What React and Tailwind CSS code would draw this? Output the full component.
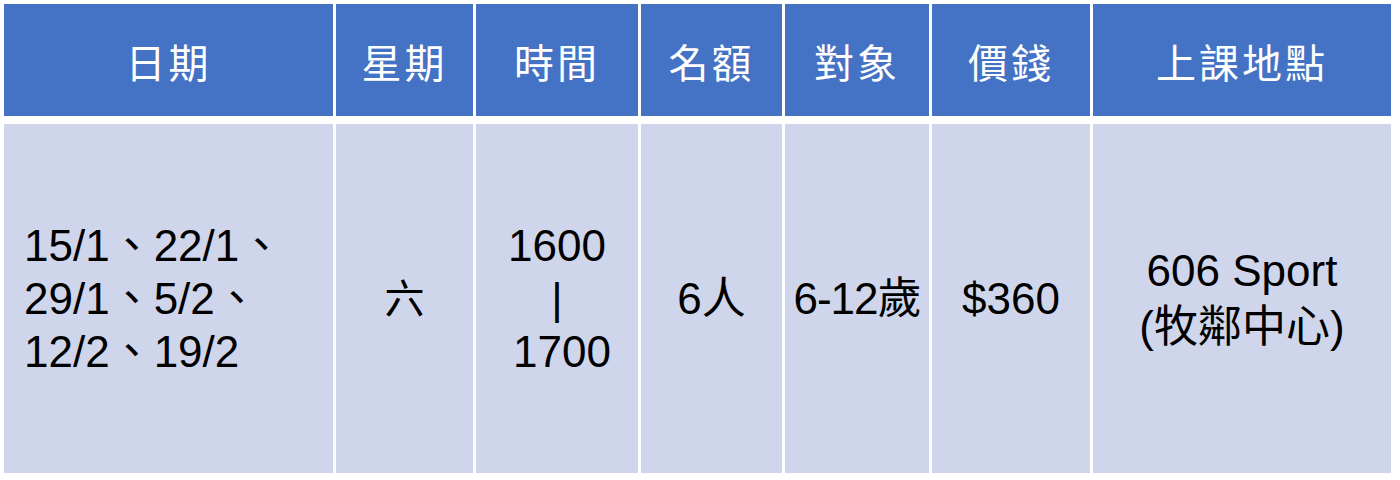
import React from 'react'

const headers = ['日期', '星期', '時間', '名額', '對象', '價錢', '上課地點']

const cjk = { fontFamily: '"Liberation Sans", "Noto Sans CJK TC", sans-serif' }

export default function App() {
  return (
    <div className="w-[1400px] h-[480px] bg-white p-[4px]" style={cjk}>
      <div className="grid grid-cols-[329px_137px_162px_141px_144px_158px_298px] grid-rows-[112px_349px] gap-x-[3px] gap-y-[8px]">
        {headers.map(h => (
          <div key={h} className="bg-[#4472C4] flex items-center justify-center pt-[8px] text-white text-[40px] tracking-[3px]">
            {h}
          </div>
        ))}

        {/* body row */}
        <div className="bg-[#CFD5EA] flex items-center pl-[20px] text-[44px] leading-[53px] text-black">
          <div>
            15/1、22/1、<br />
            29/1、5/2、<br />
            12/2、19/2
          </div>
        </div>
        <div className="bg-[#CFD5EA] flex items-center justify-center text-[40px] text-black">六</div>
        <div className="bg-[#CFD5EA] flex items-center justify-center text-[44px] leading-[53px] text-black text-center">
          <div>
            1600<br />
            |<br />
            <span className="pl-[10px]">1700</span>
          </div>
        </div>
        <div className="bg-[#CFD5EA] flex items-center justify-center text-[44px] text-black">6人</div>
        <div className="bg-[#CFD5EA] flex items-center justify-center text-[44px] text-black tracking-[-1px]">6-12歲</div>
        <div className="bg-[#CFD5EA] flex items-center justify-center text-[44px] text-black">$360</div>
        <div className="bg-[#CFD5EA] flex items-center justify-center text-[44px] leading-[56px] text-black text-center">
          <div>
            606 Sport<br />
            (牧鄰中心)
          </div>
        </div>
      </div>
    </div>
  )
}
